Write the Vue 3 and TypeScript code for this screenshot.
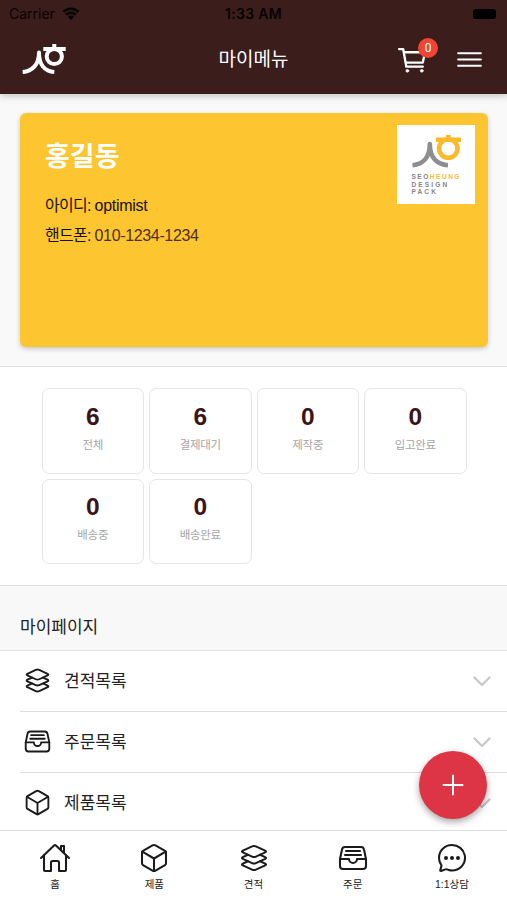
<script setup lang="ts">
interface Stat {
  count: number
  label: string
}

interface Entry {
  icon: string
  label: string
}

const icons: Record<string, string[]> = {
  home: [
    'M80 212v236a16 16 0 0016 16h96V328a24 24 0 0124-24h80a24 24 0 0124 24v136h96a16 16 0 0016-16V212',
    'M480 256L266.89 52c-5-5.28-16.69-5.34-21.78 0L32 256M400 179V64h-48v69',
  ],
  cube: [
    'M448 341.37V170.61A32 32 0 00432.11 143l-152-88.46a47.94 47.94 0 00-48.24 0L79.89 143A32 32 0 0064 170.61v170.76A32 32 0 0079.89 369l152 88.46a48 48 0 0048.24 0l152-88.46A32 32 0 00448 341.37z',
    'M69 153.99l187 110 187-110M256 463.99v-200',
  ],
  layers: [
    'M434.8 137.65l-149.36-68.1c-16.19-7.4-42.69-7.4-58.88 0L77.3 137.65c-17.6 8-17.6 21.09 0 29.09l148 67.5c16.89 7.7 44.69 7.7 61.58 0l148-67.5c17.52-8 17.52-21.1-.08-29.09z',
    'M160 308.52l-82.7 37.11c-17.6 8-17.6 21.1 0 29.1l148 67.5c16.89 7.69 44.69 7.69 61.58 0l148-67.5c17.6-8 17.6-21.1 0-29.1l-79.94-38.47',
    'M160 204.48l-82.8 37.16c-17.6 8-17.6 21.1 0 29.1l148 67.49c16.89 7.7 44.69 7.7 61.58 0l148-67.49c17.7-8 17.7-21.1.1-29.1L352 204.48',
  ],
  tray: [
    'M384 80H128c-26 0-43 14-48 40L48 272v112a48.14 48.14 0 0048 48h320a48.14 48.14 0 0048-48V272l-32-152c-5-27-23-40-48-40z',
    'M48 272h144M320 272h144M192 272a64 64 0 00128 0M144 144h224M128 208h256',
  ],
  chat: [
    'M87.48 380c1.2-4.38-1.43-10.47-3.94-14.86a42.63 42.63 0 00-2.54-3.8 199.81 199.81 0 01-33-110C47.64 139.09 140.72 48 255.82 48 356.2 48 440 117.54 459.57 209.85a199 199 0 014.43 41.64c0 112.41-89.49 204.93-204.59 204.93-18.31 0-43-4.6-56.47-8.37s-26.92-8.77-30.39-10.11a31.14 31.14 0 00-11.13-2.07 30.7 30.7 0 00-12.08 2.43L81.5 462.78a15.92 15.92 0 01-4.66 1.22 9.61 9.61 0 01-9.58-9.74 15.85 15.85 0 01.6-3.29z',
  ],
}

const stats: Stat[] = [
  { count: 6, label: '전체' },
  { count: 6, label: '결제대기' },
  { count: 0, label: '제작중' },
  { count: 0, label: '입고완료' },
  { count: 0, label: '배송중' },
  { count: 0, label: '배송완료' },
]

const menu: Entry[] = [
  { icon: 'layers', label: '견적목록' },
  { icon: 'tray', label: '주문목록' },
  { icon: 'cube', label: '제품목록' },
]

const tabs: Entry[] = [
  { icon: 'home', label: '홈' },
  { icon: 'cube', label: '제품' },
  { icon: 'layers', label: '견적' },
  { icon: 'tray', label: '주문' },
  { icon: 'chat', label: '1:1상담' },
]
</script>

<template>
  <div class="screen">
    <header class="header">
      <div class="status">
        <div class="carrier">
          <span>Carrier</span>
          <svg class="wifi" viewBox="0 0 18 13">
            <path d="M1.4 4.9a10.8 10.8 0 0 1 15.2 0M4.1 7.8a7 7 0 0 1 9.8 0" />
            <path class="wifi-dot" d="M9 13 5.8 9.8a4.5 4.5 0 0 1 6.4 0z" />
          </svg>
        </div>
        <span class="time">1:33 AM</span>
        <div class="battery-slot"><span class="battery"></span></div>
      </div>
      <div class="toolbar">
        <div class="side">
          <svg class="brand" viewBox="0 0 44 32">
            <path d="M.7 29c9.300-.6 16.300-7 16.300-19.500 0 12.500 6 18.900 15.300 19.500" />
            <path d="M21.300 6H43.700M32.300 6V1" />
            <circle cx="32.300" cy="13.500" r="7.600" />
          </svg>
        </div>
        <h1 class="title">마이메뉴</h1>
        <div class="side actions">
          <div class="cart">
            <svg class="cart-icon" viewBox="0 0 512 512">
              <circle cx="176" cy="416" r="22" />
              <circle cx="400" cy="416" r="22" />
              <path d="M48 80h64l48 272h256" />
              <path d="M160 288h249.440a8 8 0 0 0 7.850-6.430l28.800-144a8 8 0 0 0-7.850-9.570H128" />
            </svg>
            <span class="badge">0</span>
          </div>
          <svg class="burger" viewBox="0 0 512 512">
            <path d="M80 160h352M80 256h352M80 352h352" />
          </svg>
        </div>
      </div>
    </header>

    <main class="content">
      <section class="profile">
        <div class="card">
          <div class="person">
            <h2 class="name">홍길동</h2>
            <p class="line">아이디: <span class="login">optimist</span></p>
            <p class="line">핸드폰: <span class="phone">010-1234-1234</span></p>
          </div>
          <div class="company">
            <svg class="company-mark" viewBox="0 0 50 34">
              <path class="grey" d="M.5 31.200c10.500-.8 17.300-7.700 17.300-21.200 0 13.500 7.200 20.400 18.200 21.200" />
              <path class="gold" d="M24 5.700h25M36.300 5.700V1" />
              <circle class="gold" cx="36.300" cy="14.500" r="9.200" />
            </svg>
            <div class="company-text">
              <div class="seo">SEO<b>HEUNG</b></div>
              <div class="design">DESIGN</div>
              <div class="pack">PACK</div>
            </div>
          </div>
        </div>
      </section>

      <section class="stats">
        <div v-for="stat in stats" :key="stat.label" class="stat">
          <strong>{{ stat.count }}</strong>
          <span>{{ stat.label }}</span>
        </div>
      </section>

      <h3 class="section-title">마이페이지</h3>
      <ul class="menu">
        <li v-for="item in menu" :key="item.label">
          <svg class="icon menu-icon" viewBox="0 0 512 512">
            <path v-for="d in icons[item.icon]" :key="d" :d="d" />
          </svg>
          <div class="menu-row">
            <span class="menu-label">{{ item.label }}</span>
            <svg class="chevron" viewBox="0 0 18 11"><path d="M1.500 1.500 9 9l7.500-7.500" /></svg>
          </div>
        </li>
      </ul>
    </main>

    <nav class="tabs">
      <div v-for="tab in tabs" :key="tab.label" class="tab">
        <svg class="icon tab-icon" viewBox="0 0 512 512">
          <path v-for="d in icons[tab.icon]" :key="d" :d="d" />
          <g v-if="tab.icon === 'chat'" class="dots">
            <circle cx="160" cy="256" r="32" />
            <circle cx="256" cy="256" r="32" />
            <circle cx="352" cy="256" r="32" />
          </g>
        </svg>
        <span>{{ tab.label }}</span>
      </div>
    </nav>

    <button class="fab" aria-label="추가">
      <svg viewBox="0 0 22 22"><path d="M11 1.500v19M1.500 11h19" /></svg>
    </button>
  </div>
</template>

<style>
body {
  margin: 0;
}
</style>

<style scoped>
.screen {
  position: relative;
  display: flex;
  flex-direction: column;
  width: 507px;
  height: 900px;
  overflow: hidden;
  background: #fff;
  color: #222;
  font-family: "Liberation Sans", "Noto Sans CJK KR", sans-serif;
}

h1, h2, h3, p, ul {
  margin: 0;
  padding: 0;
  font-weight: 400;
}

svg {
  display: block;
  fill: none;
  stroke: currentColor;
  stroke-linecap: round;
  stroke-linejoin: round;
}

.header {
  flex: none;
  z-index: 1;
  height: 94px;
  background: #3b1d1c;
  color: #fff;
  box-shadow: 0 2px 7px rgba(0, 0, 0, 0.22);
}

.status {
  display: grid;
  grid-template-columns: 1fr auto 1fr;
  align-items: center;
  height: 27px;
  padding: 0 9px;
  color: #080303;
  font: 400 14px/27px Inter, sans-serif;
}

.carrier {
  display: flex;
  align-items: center;
  gap: 7px;
}

.wifi {
  width: 18px;
  height: 13px;
  stroke-width: 2.600;
  stroke-linecap: butt;
}

.wifi-dot {
  fill: currentColor;
  stroke: none;
}

.time {
  font-weight: 600;
  font-size: 14px;
  letter-spacing: 0.300px;
}

.battery-slot {
  display: flex;
  justify-content: flex-end;
}

.battery {
  width: 23px;
  height: 10px;
  margin-right: 2px;
  border-radius: 3px;
  background: #000;
}

.toolbar {
  display: grid;
  grid-template-columns: 1fr auto 1fr;
  align-items: center;
  height: 64px;
  padding: 0 22px;
}

.brand {
  width: 44px;
  height: 32px;
  stroke-width: 4;
  stroke-linecap: butt;
}

.title {
  padding-top: 2px;
  font-size: 19px;
  line-height: 28px;
}

.actions {
  display: flex;
  justify-content: flex-end;
  align-items: center;
  gap: 24px;
}

.cart {
  position: relative;
}

.cart-icon {
  width: 33px;
  height: 33px;
  margin-top: 2px;
  stroke-width: 36;
}

.cart-icon circle {
  fill: currentColor;
  stroke-width: 10;
}

.badge {
  position: absolute;
  top: -4px;
  right: -9px;
  width: 20px;
  height: 20px;
  border-radius: 50%;
  background: #f04434;
  font: 12px/20px Roboto, sans-serif;
  text-align: center;
}

.burger {
  width: 33px;
  height: 33px;
  margin-right: -1px;
  stroke-width: 32;
}

.content {
  flex: 1;
  min-height: 0;
  overflow: hidden;
}

.profile {
  height: 253px;
  padding: 19px 19px 0 20px;
  background: #f9f9f9;
  border-bottom: 1px solid #e3e3e3;
}

.card {
  display: flex;
  justify-content: space-between;
  box-sizing: border-box;
  height: 234px;
  padding: 12px 13px 0 25px;
  border-radius: 6px;
  background: #fdc530;
  box-shadow: 0 2px 5px rgba(0, 0, 0, 0.2);
}

.person {
  padding-top: 12px;
}

.name {
  margin-bottom: 14px;
  color: #fff;
  font-size: 27px;
  font-weight: 700;
  line-height: 40px;
}

.line {
  color: #171108;
  font-size: 16px;
  line-height: 29.500px;
  letter-spacing: -0.700px;
}

.login {
  letter-spacing: -0.300px;
}

.phone {
  color: #50300f;
  letter-spacing: -0.350px;
}

.company {
  width: 78.500px;
  height: 78.500px;
  box-sizing: border-box;
  padding: 9px 0 0 15px;
  background: #fff;
}

.company-mark {
  width: 50px;
  height: 34px;
  stroke-linecap: butt;
}

.grey {
  stroke: #8e8e91;
  stroke-width: 4.600;
}

.gold {
  stroke: #fcb92b;
  stroke-width: 4.600;
}

.company-text {
  margin-top: 5px;
  color: #858588;
  font-size: 6.500px;
  font-weight: 700;
  line-height: 7.500px;
  white-space: nowrap;
}

.seo {
  letter-spacing: 1.530px;
}

.seo b {
  color: #fcb92b;
}

.design {
  letter-spacing: 2.150px;
}

.pack {
  letter-spacing: 2.150px;
}

.stats {
  display: grid;
  grid-template-columns: repeat(4, 102.500px);
  grid-auto-rows: 85.500px;
  gap: 5px;
  box-sizing: border-box;
  height: 218px;
  padding: 21px 40.500px 0 41.500px;
}

.stat {
  display: flex;
  flex-direction: column;
  align-items: center;
  box-sizing: border-box;
  padding-top: 11.500px;
  border: 1.500px solid #e5e5e5;
  border-radius: 7px;
}

.stat strong {
  color: #3b1418;
  font: 700 24.500px/32px "Liberation Sans", sans-serif;
}

.stat span {
  color: #a5a5a5;
  font-size: 11.500px;
  line-height: 25px;
  letter-spacing: -0.300px;
}

.section-title {
  box-sizing: border-box;
  height: 66px;
  padding: 29px 20px 0;
  border-top: 1px solid #e0e0e0;
  border-bottom: 1px solid #e0e0e0;
  background: #f8f8f8;
  font-size: 17px;
  line-height: 26px;
}

.menu {
  list-style: none;
}

.menu li {
  display: flex;
  align-items: center;
  height: 61px;
  margin-left: 20px;
  box-sizing: border-box;
  border-bottom: 1px solid #dedede;
}

.menu-row {
  display: flex;
  flex: 1;
  justify-content: space-between;
  align-items: center;
  padding: 0 16px 0 12px;
}

.icon {
  color: #1b1b1b;
  stroke-width: 33;
}

.menu-icon {
  width: 29px;
  height: 29px;
  margin: 0 0 1px 3px;
}

.menu-label {
  padding-top: 2px;
  font-size: 17px;
  line-height: 26px;
}

.chevron {
  width: 18px;
  height: 11px;
  color: #c8c8c8;
  stroke-width: 2.200;
}

.tabs {
  flex: none;
  display: grid;
  grid-template-columns: repeat(5, 99.200px);
  justify-content: center;
  box-sizing: border-box;
  height: 70px;
  border-top: 1px solid #dedede;
  background: #fff;
}

.tab {
  display: flex;
  flex-direction: column;
  align-items: center;
  padding-top: 11px;
  font-size: 10.500px;
  line-height: 18px;
}

.tab-icon {
  width: 32px;
  height: 32px;
  margin-bottom: 1px;
}

.dots {
  fill: currentColor;
  stroke: none;
}

.fab {
  position: absolute;
  right: 20px;
  bottom: 81px;
  display: grid;
  place-items: center;
  width: 68px;
  height: 68px;
  padding: 0;
  border: 0;
  border-radius: 50%;
  background: #dd3545;
  color: #fff;
  box-shadow: 0 3px 7px rgba(0, 0, 0, 0.35);
}

.fab svg {
  width: 22px;
  height: 22px;
  stroke-width: 2;
}
</style>
